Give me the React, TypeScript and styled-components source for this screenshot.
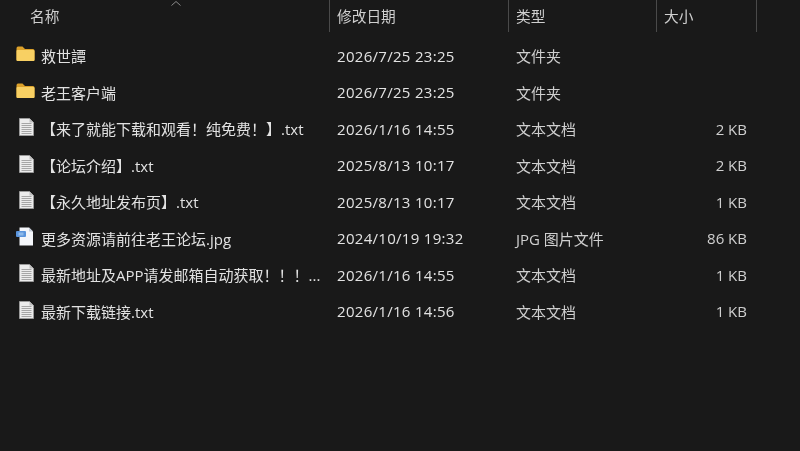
import styled, { createGlobalStyle } from 'styled-components';

const FONT = `'Open Sans', 'Noto Sans CJK SC', sans-serif`;

type FileKind = 'folder' | 'text' | 'image';

const files: {
  name: string;
  date: string;
  type: string;
  size?: string;
  kind: FileKind;
}[] = [
  { name: '救世譚', date: '2026/7/25 23:25', type: '文件夹', kind: 'folder' },
  { name: '老王客户端', date: '2026/7/25 23:25', type: '文件夹', kind: 'folder' },
  { name: '【来了就能下载和观看！纯免费！】.txt', date: '2026/1/16 14:55', type: '文本文档', size: '2 KB', kind: 'text' },
  { name: '【论坛介绍】.txt', date: '2025/8/13 10:17', type: '文本文档', size: '2 KB', kind: 'text' },
  { name: '【永久地址发布页】.txt', date: '2025/8/13 10:17', type: '文本文档', size: '1 KB', kind: 'text' },
  { name: '更多资源请前往老王论坛.jpg', date: '2024/10/19 19:32', type: 'JPG 图片文件', size: '86 KB', kind: 'image' },
  { name: '最新地址及APP请发邮箱自动获取！！！...', date: '2026/1/16 14:55', type: '文本文档', size: '1 KB', kind: 'text' },
  { name: '最新下载链接.txt', date: '2026/1/16 14:56', type: '文本文档', size: '1 KB', kind: 'text' },
];

function FolderIcon() {
  return (
    <svg width="19" height="16" viewBox="0 0 19 16">
      <path d="M0.5 2.500 Q0.500 .5 2 .5 H6.500 L9 3 H17 Q18.500 3 18.500 5 V13.500 Q18.500 15 17 15 H2 Q0.500 15 0.500 13.500 Z" fill="#dca12a" />
      <rect x="0.500" y="4" width="18" height="11" rx="1" fill="#f8d063" />
    </svg>
  );
}

function TextIcon() {
  return (
    <svg width="15" height="18" viewBox="0 0 15 18">
      <path d="M.5 .5 H10.500 L14.500 4.500 V17.500 H.5 Z" fill="#ececec" stroke="#9a9a9a" strokeWidth="1" />
      <path d="M10.500 .5 V4.500 H14.500 Z" fill="#bdbdbd" />
      <path d="M2.500 5.500 H12.500 M2.500 7.500 H12.500 M2.500 9.500 H12.500 M2.500 11.500 H12.500 M2.500 13.500 H12.500 M2.500 15.500 H12.500" stroke="#a6a6a6" strokeWidth="1" />
    </svg>
  );
}

function ImageIcon() {
  return (
    <svg width="18" height="19" viewBox="0 0 18 19">
      <path d="M3.500 .5 H13 L17 4.500 V18.500 H3.500 Z" fill="#f4f6fa" />
      <path d="M13 .5 V4.500 H17 Z" fill="#c3cbd8" />
      <rect x="0" y="4" width="10" height="6" rx="1" fill="#5a94dc" />
      <rect x="2.500" y="5.500" width="5" height="3" fill="#8db9ea" />
    </svg>
  );
}

const icons: Record<FileKind, () => React.JSX.Element> = {
  folder: FolderIcon,
  text: TextIcon,
  image: ImageIcon,
};

export default function App() {
  return (
    <>
      <GlobalStyle />
      <Window>
        <Header>
          <NameHead>
            名称
            <SortArrow viewBox="0 0 10 5" fill="none">
              <path d="M.5 4.500 L5 .5 L9.500 4.500" stroke="#8a8a8a" strokeWidth="1" />
            </SortArrow>
          </NameHead>
          <DateHead>修改日期</DateHead>
          <TypeHead>类型</TypeHead>
          <SizeHead>大小</SizeHead>
        </Header>
        <List>
          {files.map((file) => {
            const Icon = icons[file.kind];
            return (
              <Row key={file.name}>
                <NameCell>
                  <IconSlot $kind={file.kind}>
                    <Icon />
                  </IconSlot>
                  <FileName>{file.name}</FileName>
                </NameCell>
                <DateCell>{file.date}</DateCell>
                <TypeCell>{file.type}</TypeCell>
                <SizeCell>{file.size}</SizeCell>
              </Row>
            );
          })}
        </List>
      </Window>
    </>
  );
}

const GlobalStyle = createGlobalStyle`
  html, body {
    margin: 0;
    background: #191919;
  }
`;

const Window = styled.div`
  width: 800px;
  height: 451px;
  overflow: hidden;
  background: #191919;
  color: #e2e2e2;
  font-family: ${FONT};
  font-size: 15px;
  filter: blur(0.35px);
`;

const Header = styled.div`
  display: flex;
  height: 32px;
  color: #cfcfcf;
  font-size: 14.7px;
`;

const HeadCell = styled.div`
  position: relative;
  box-sizing: border-box;
  padding-left: 7px;
  line-height: 32px;
  border-right: 1px solid #4a4a4a;
`;

const NameHead = styled(HeadCell)`
  width: 330px;
  padding-left: 30px;
`;

const DateHead = styled(HeadCell)`
  width: 179px;
`;

const TypeHead = styled(HeadCell)`
  width: 148px;
`;

const SizeHead = styled(HeadCell)`
  width: 100px;
`;

const SortArrow = styled.svg`
  position: absolute;
  left: 171px;
  top: 1px;
  width: 10px;
  height: 5px;
`;

const List = styled.div`
  display: grid;
  grid-auto-rows: 36.5px;
  padding-top: 5.5px;
`;

const Row = styled.div`
  display: flex;
  align-items: center;
`;

const NameCell = styled.div`
  display: flex;
  align-items: center;
  width: 330px;
  padding-left: 16px;
  box-sizing: border-box;
`;

const IconSlot = styled.div<{ $kind: FileKind }>`
  display: flex;
  flex: none;
  box-sizing: border-box;
  width: 25px;
  margin-top: -3px;
  padding-left: ${({ $kind }) => ($kind === 'text' ? '3px' : '0')};
`;

const FileName = styled.span`
  white-space: nowrap;
`;

const DateCell = styled.div`
  width: 179px;
  padding-left: 7px;
  box-sizing: border-box;
  letter-spacing: 0.3px;
`;

const TypeCell = styled.div`
  width: 148px;
  padding-left: 7px;
  box-sizing: border-box;
  color: #cfcfcf;
`;

const SizeCell = styled.div`
  width: 90px;
  text-align: right;
  color: #cfcfcf;
`;
